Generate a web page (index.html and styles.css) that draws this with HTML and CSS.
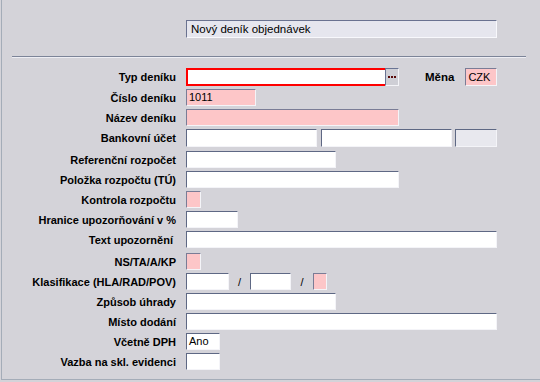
FILE: index.html
```html
<!DOCTYPE html>
<html lang="cs">
<head>
<meta charset="utf-8">
<title>Nový deník objednávek</title>
<link rel="stylesheet" href="styles.css">
</head>
<body>
<div class="frame">
  <div class="title-row"><div class="title">Nový deník objednávek</div></div>
  <div class="sep"></div>
  <div class="form">
    <div class="row row-tall">
      <label class="lbl">Typ deníku</label>
      <div class="fields">
        <span class="box req w199"></span>
        <span class="btn"><i></i><i></i><i></i></span>
        <label class="lbl-inline">Měna</label>
        <span class="box pink w32">CZK</span>
      </div>
    </div>
    <div class="row">
      <label class="lbl">Číslo deníku</label>
      <div class="fields"><span class="box pink w70">1011</span></div>
    </div>
    <div class="row">
      <label class="lbl">Název deníku</label>
      <div class="fields"><span class="box pink w213"></span></div>
    </div>
    <div class="row row-tall row-bank">
      <label class="lbl">Bankovní účet</label>
      <div class="fields">
        <span class="box w131"></span>
        <span class="box w131 ml4"></span>
        <span class="box grey w42 ml3"></span>
      </div>
    </div>
    <div class="row">
      <label class="lbl">Referenční rozpočet</label>
      <div class="fields"><span class="box w150"></span></div>
    </div>
    <div class="row">
      <label class="lbl">Položka rozpočtu (TÚ)</label>
      <div class="fields"><span class="box w213"></span></div>
    </div>
    <div class="row">
      <label class="lbl">Kontrola rozpočtu</label>
      <div class="fields"><span class="box pink w15"></span></div>
    </div>
    <div class="row">
      <label class="lbl">Hranice upozorňování v %</label>
      <div class="fields"><span class="box w52"></span></div>
    </div>
    <div class="row">
      <label class="lbl">Text upozornění&nbsp;</label>
      <div class="fields"><span class="box w311"></span></div>
    </div>
    <div class="row row-ns">
      <label class="lbl">NS/TA/A/KP</label>
      <div class="fields"><span class="box pink w15"></span></div>
    </div>
    <div class="row">
      <label class="lbl">Klasifikace (HLA/RAD/POV)</label>
      <div class="fields">
        <span class="box w43"></span>
        <span class="slash s21">/</span>
        <span class="box w41"></span>
        <span class="slash s22">/</span>
        <span class="box pink w14"></span>
      </div>
    </div>
    <div class="row">
      <label class="lbl">Způsob úhrady</label>
      <div class="fields"><span class="box w150"></span></div>
    </div>
    <div class="row">
      <label class="lbl">Místo dodání</label>
      <div class="fields"><span class="box w311"></span></div>
    </div>
    <div class="row">
      <label class="lbl">Včetně DPH</label>
      <div class="fields"><span class="box w34">Ano</span></div>
    </div>
    <div class="row">
      <label class="lbl">Vazba na skl. evidenci</label>
      <div class="fields"><span class="box w34"></span></div>
    </div>
  </div>
</div>
</body>
</html>
```

FILE: styles.css
```css
html, body {
  margin: 0;
  padding: 0;
}
body {
  width: 540px;
  height: 382px;
  overflow: hidden;
  background: #d4d3d9;
  font-family: "Liberation Sans", Arial, sans-serif;
  font-size: 11px;
  color: #000;
}
.frame {
  margin-left: 1px;
  height: 380px;
  box-sizing: border-box;
  border-left: 1px solid #a4acb8;
  border-bottom: 1px solid #a4acb8;
  padding-top: 20px;
}
.title-row {
  padding-left: 184px;
}
.title {
  width: 311px;
  height: 18px;
  box-sizing: border-box;
  background: #e6e6ee;
  border: 1px solid;
  border-color: #6a7290 #f8f8fc #f8f8fc #6a7290;
  padding-left: 4px;
  line-height: 16px;
  font-size: 11.5px;
}
.sep {
  margin: 18px 0 0 10px;
  width: 514px;
  height: 0;
  border-top: 1px solid #7c8498;
  border-bottom: 1px solid #eeeef4;
}
.form {
  margin-top: 10px;
  display: flex;
  flex-direction: column;
  gap: 3px;
}
.row {
  display: flex;
  align-items: center;
  height: 17px;
}
.row-tall {
  height: 18px;
}
.row-bank {
  margin-bottom: 1px;
}
.row-ns {
  margin-top: 2px;
}
.lbl {
  width: 174px;
  flex: none;
  text-align: right;
  font-weight: bold;
  white-space: nowrap;
}
.fields {
  margin-left: 10px;
  display: flex;
  align-items: center;
  height: 100%;
}
.box {
  display: block;
  height: 100%;
  box-sizing: border-box;
  background: #fff;
  border: 1px solid;
  border-color: #5e6884 #f4f4f8 #f4f4f8 #5e6884;
  padding-left: 2px;
  line-height: 15px;
  white-space: nowrap;
}
.row-tall .box {
  line-height: 16px;
}
.pink {
  background: #fdc6c8;
  border-color: #7a7c96 #f4f4f8 #f4f4f8 #7a7c96;
}
.grey {
  background: #e8e8ee;
}
.req {
  border: 2px solid #ff0000;
  border-right: none;
}
.btn {
  width: 14px;
  height: 100%;
  box-sizing: border-box;
  background: #cfcfd6;
  border: 1px solid;
  border-color: #6a7494 #f4f4f8 #f4f4f8 #6a7494;
  display: flex;
  align-items: center;
  justify-content: center;
  gap: 1px;
}
.btn i {
  display: block;
  width: 2px;
  height: 2px;
  background: #5a0a0a;
}
.lbl-inline {
  margin-left: 26px;
  margin-right: 11px;
  font-weight: bold;
  font-size: 11.5px;
}
.slash {
  text-align: center;
}
.s21 { width: 21px; }
.s22 { width: 22px; }
.ml4 { margin-left: 4px; }
.ml3 { margin-left: 3px; }
.w14 { width: 14px; }
.w15 { width: 15px; }
.w32 { width: 32px; }
.w34 { width: 34px; }
.w41 { width: 41px; }
.w42 { width: 42px; }
.w43 { width: 43px; }
.w52 { width: 52px; }
.w70 { width: 70px; }
.w131 { width: 131px; }
.w150 { width: 150px; }
.w199 { width: 199px; }
.w213 { width: 213px; }
.w311 { width: 311px; }
```
